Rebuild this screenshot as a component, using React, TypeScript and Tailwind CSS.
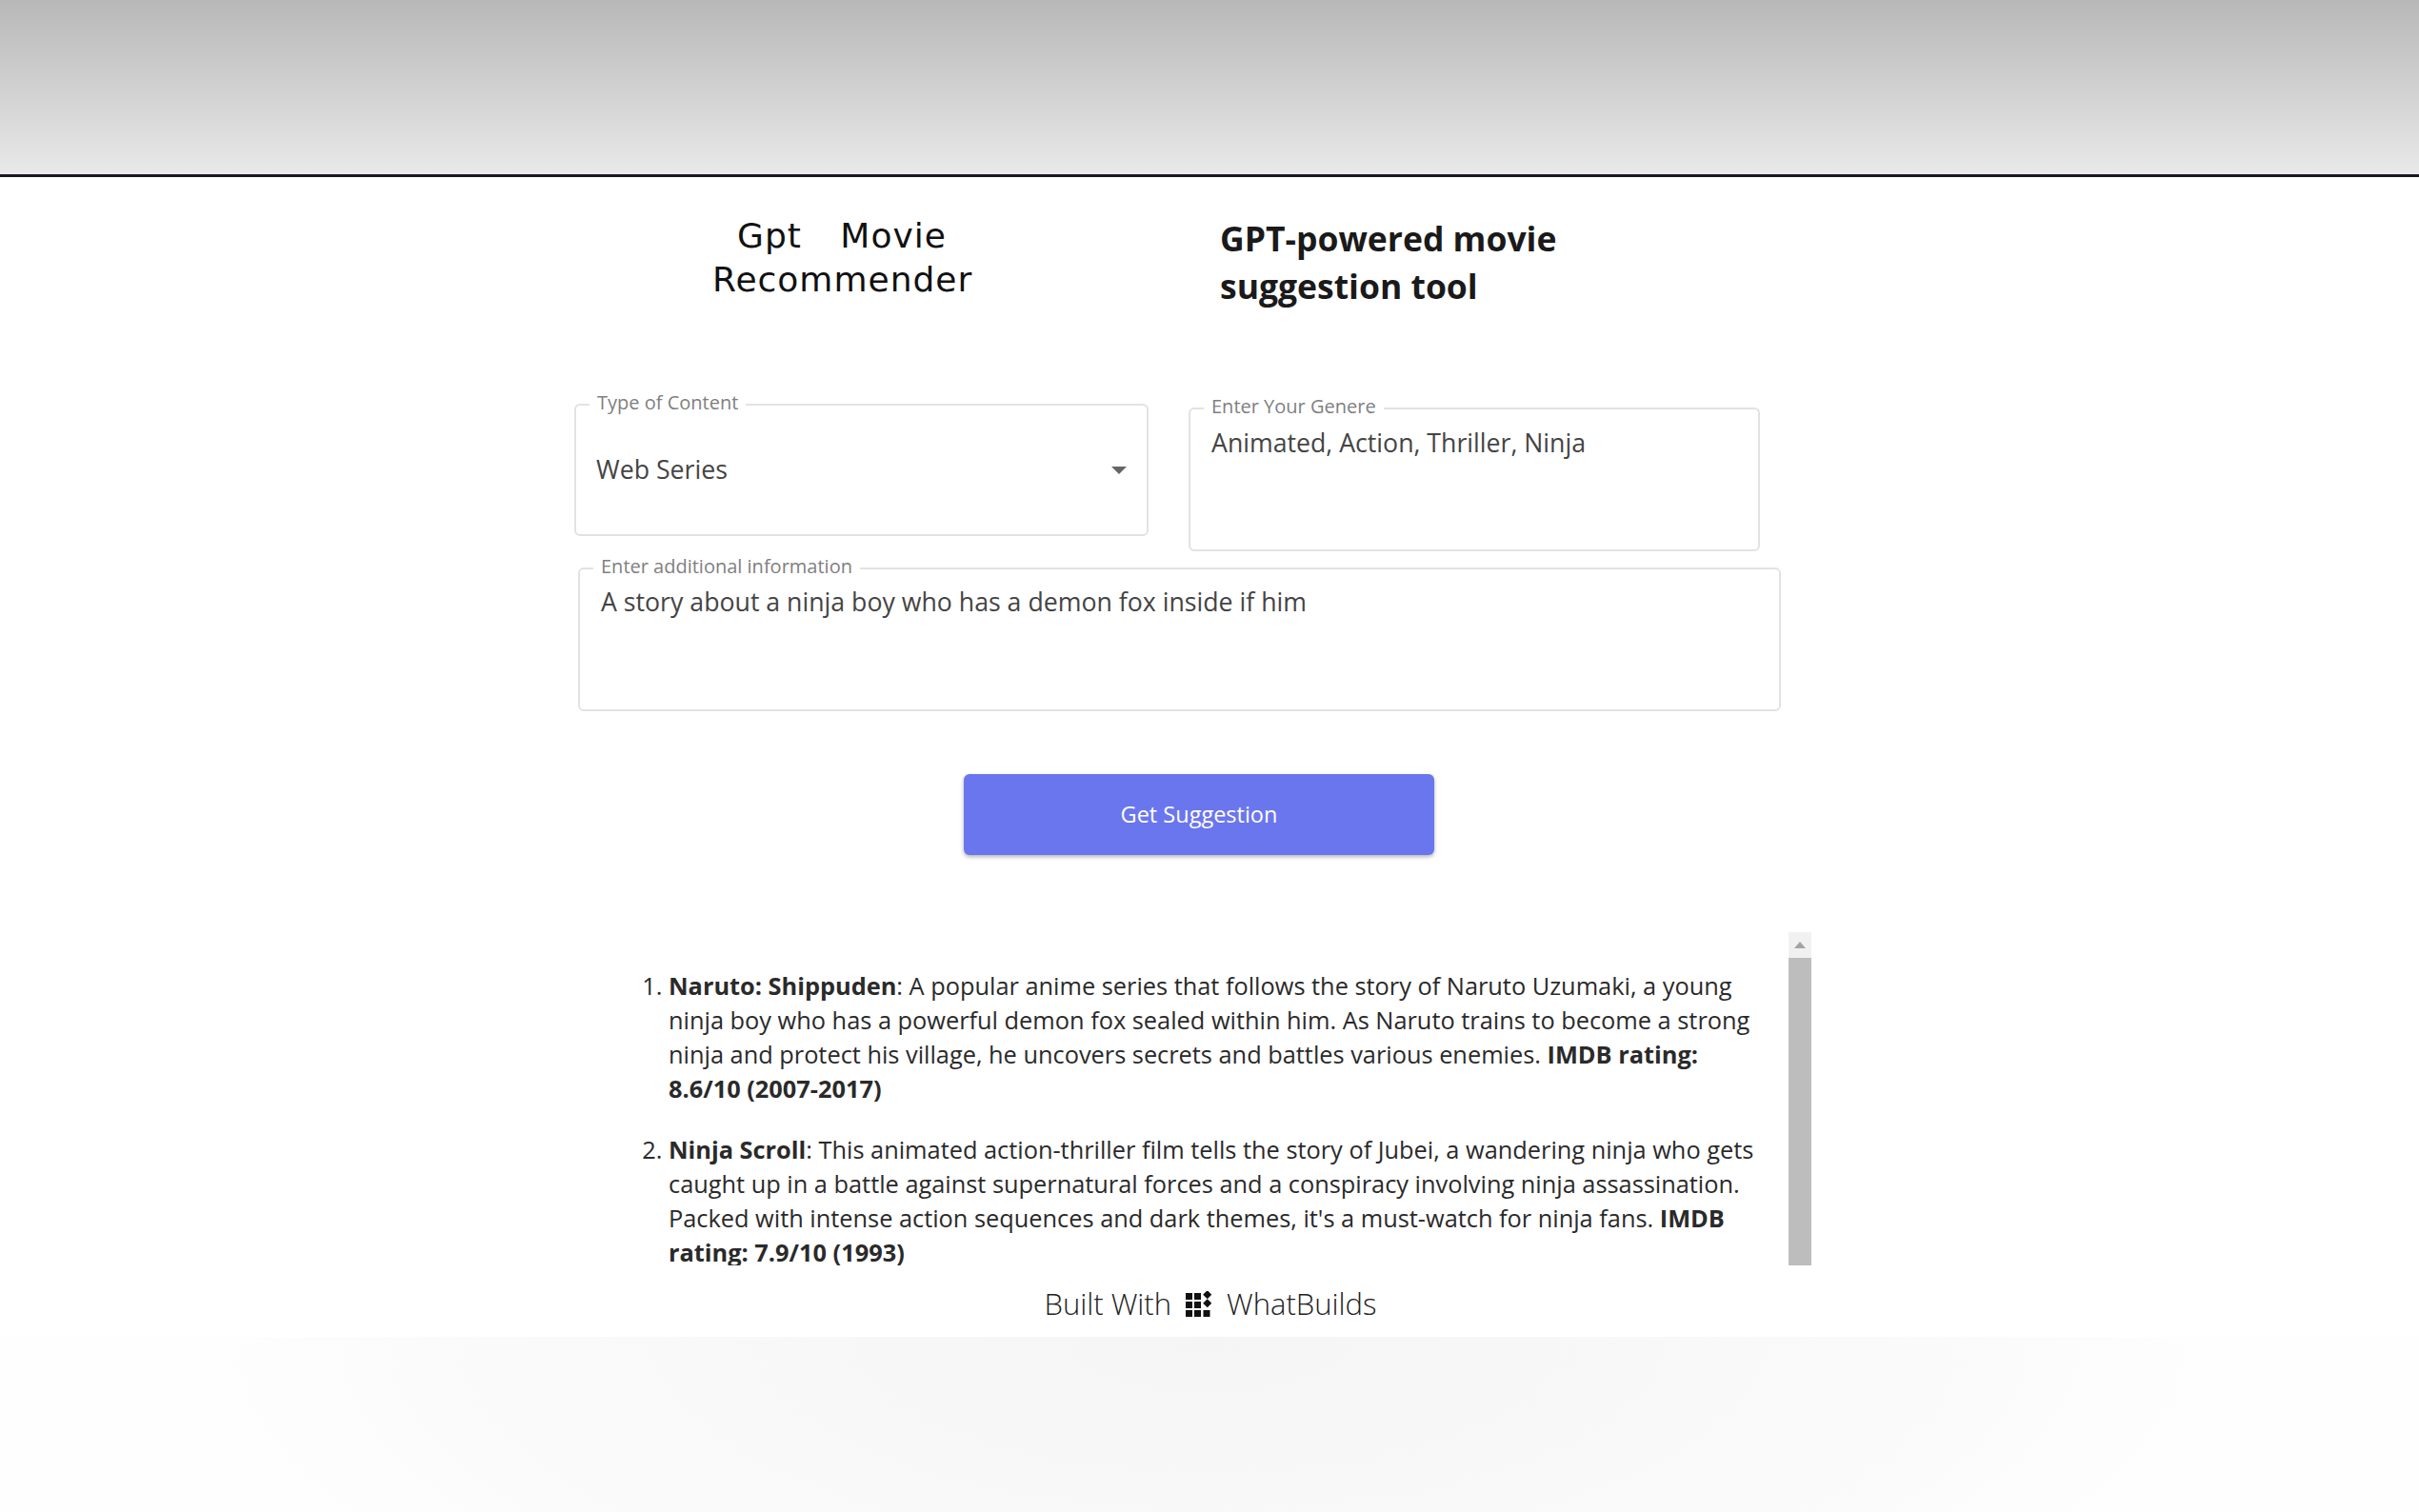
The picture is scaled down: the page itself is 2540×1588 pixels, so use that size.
import React from 'react';

const sans = "font-['Open_Sans',sans-serif]";

const Field = ({ label, className, children }: { label: string; className: string; children: React.ReactNode }) => (
  <fieldset className={`border-2 border-[#e2e2e2] rounded-[6px] px-[22px] min-w-0 ${className}`}>
    <legend className="ml-[-8px] px-[8px] text-[20px] leading-[24px] text-[#808080]">
      <span className="relative top-[-2px]">{label}</span>
    </legend>
    {children}
  </fieldset>
);

const GridIcon = () => (
  <svg width="28" height="28" viewBox="0 0 28 28" fill="#111">
    <rect x="1" y="2" width="7" height="7" />
    <rect x="10" y="2" width="7" height="7" />
    <rect x="20.5" y="0.5" width="6.5" height="6.5" transform="rotate(45 23.75 3.75)" />
    <rect x="1" y="11" width="7" height="7" />
    <rect x="10" y="11" width="7" height="7" />
    <rect x="20.5" y="9.5" width="6.5" height="6.5" transform="rotate(45 23.75 12.75)" />
    <rect x="1" y="20" width="7" height="7" />
    <rect x="10" y="20" width="7" height="7" />
    <rect x="19.5" y="20" width="7" height="7" />
  </svg>
);

export default function App() {
  return (
    <div className={`min-h-[1588px] bg-white flex flex-col ${sans}`}>
      <header className="h-[186px] shrink-0 bg-gradient-to-b from-[#b8b8b8] to-[#e9e9e9] border-b-[3px] border-[#1d1620]" />

      {/* title row */}
      <div className="flex mt-[39px] h-[120px]">
        <div className="ml-[748px] w-[272px] text-center text-[36px] leading-[46px] text-[#111] font-['DejaVu_Sans',sans-serif] font-normal tracking-[1px]">
          <div className="whitespace-nowrap [word-spacing:28px]">Gpt Movie</div>
          <div className="whitespace-nowrap">Recommender</div>
        </div>
        <h2 className="ml-[261px] w-[400px] text-[35.5px] leading-[50px] font-bold text-[#1a1a1a]">
          GPT-powered movie suggestion tool
        </h2>
      </div>

      {/* form */}
      <div className="flex items-start mt-[68px] ml-[603px]">
        <Field label="Type of Content" className="w-[603px] h-[150px]">
          <div className="flex items-center justify-between pt-[38px] text-[26.7px] leading-[36px] text-[#444]">
            <span className="ml-[-1px]">Web Series</span>
            <svg width="16" height="8" viewBox="0 0 16 8" className="mr-[-1px] mt-[2px]" fill="#666">
              <polygon points="0,0 16,0 8,8" />
            </svg>
          </div>
        </Field>
        <Field label="Enter Your Genere" className="ml-[42px] mt-[4px] w-[600px] h-[162px]">
          <div className="text-[26.7px] leading-[36px] text-[#444] pt-[6px]">Animated, Action, Thriller, Ninja</div>
        </Field>
      </div>
      <Field label="Enter additional information" className="ml-[607px] mt-[6px] w-[1263px] h-[162px]">
        <div className="text-[26.7px] leading-[36px] text-[#444] pt-[5px]">A story about a ninja boy who has a demon fox inside if him</div>
      </Field>

      <button className="ml-[1012px] mt-[66px] w-[494px] h-[85px] rounded-[6px] bg-[#6a76ee] text-white text-[23.5px] font-medium shadow-[0_2px_4px_rgba(0,0,0,0.3)]">
        Get Suggestion
      </button>

      {/* results */}
      <div className="flex ml-[640px] mt-[81px] w-[1262px] h-[350px]">
        <div className="flex-1 min-w-0 overflow-hidden pt-[38px]">
          <ol className="list-decimal pl-[62px] pr-[28px] text-[25.35px] leading-[36px] text-[#2a2a2a]">
            <li className="mb-[28px]">
              <strong>Naruto: Shippuden</strong>: A popular anime series that follows the story of Naruto Uzumaki, a young ninja boy who has a powerful demon fox sealed within him. As Naruto trains to become a strong ninja and protect his village, he uncovers secrets and battles various enemies. <strong>IMDB rating: 8.6/10 (2007-2017)</strong>
            </li>
            <li>
              <strong>Ninja Scroll</strong>: This animated action-thriller film tells the story of Jubei, a wandering ninja who gets caught up in a battle against supernatural forces and a conspiracy involving ninja assassination. Packed with intense action sequences and dark themes, it's a must-watch for ninja fans. <strong>IMDB rating: 7.9/10 (1993)</strong>
            </li>
          </ol>
        </div>
        <div className="w-[24px] shrink-0 flex flex-col bg-[#f1f1f1]">
          <div className="h-[27px] shrink-0 flex items-center justify-center">
            <svg width="12" height="7" viewBox="0 0 12 7" fill="#a3a3a3">
              <polygon points="6,0 12,7 0,7" />
            </svg>
          </div>
          <div className="flex-1 bg-[#bdbdbd]" />
        </div>
      </div>

      {/* footer */}
      <div className="flex items-center justify-center gap-[14px] h-[75px] pt-[6px] ml-[2px] text-[31px] text-[#222] font-light">
        <span>Built With</span>
        <GridIcon />
        <span className="ml-[2px]">WhatBuilds</span>
      </div>
      <div className="flex-1 bg-[radial-gradient(ellipse_1050px_400px_at_50%_0%,#f5f5f5_0%,#f9f9f9_55%,#fbfbfb_80%,#fefefe_100%)]" />
    </div>
  );
}
